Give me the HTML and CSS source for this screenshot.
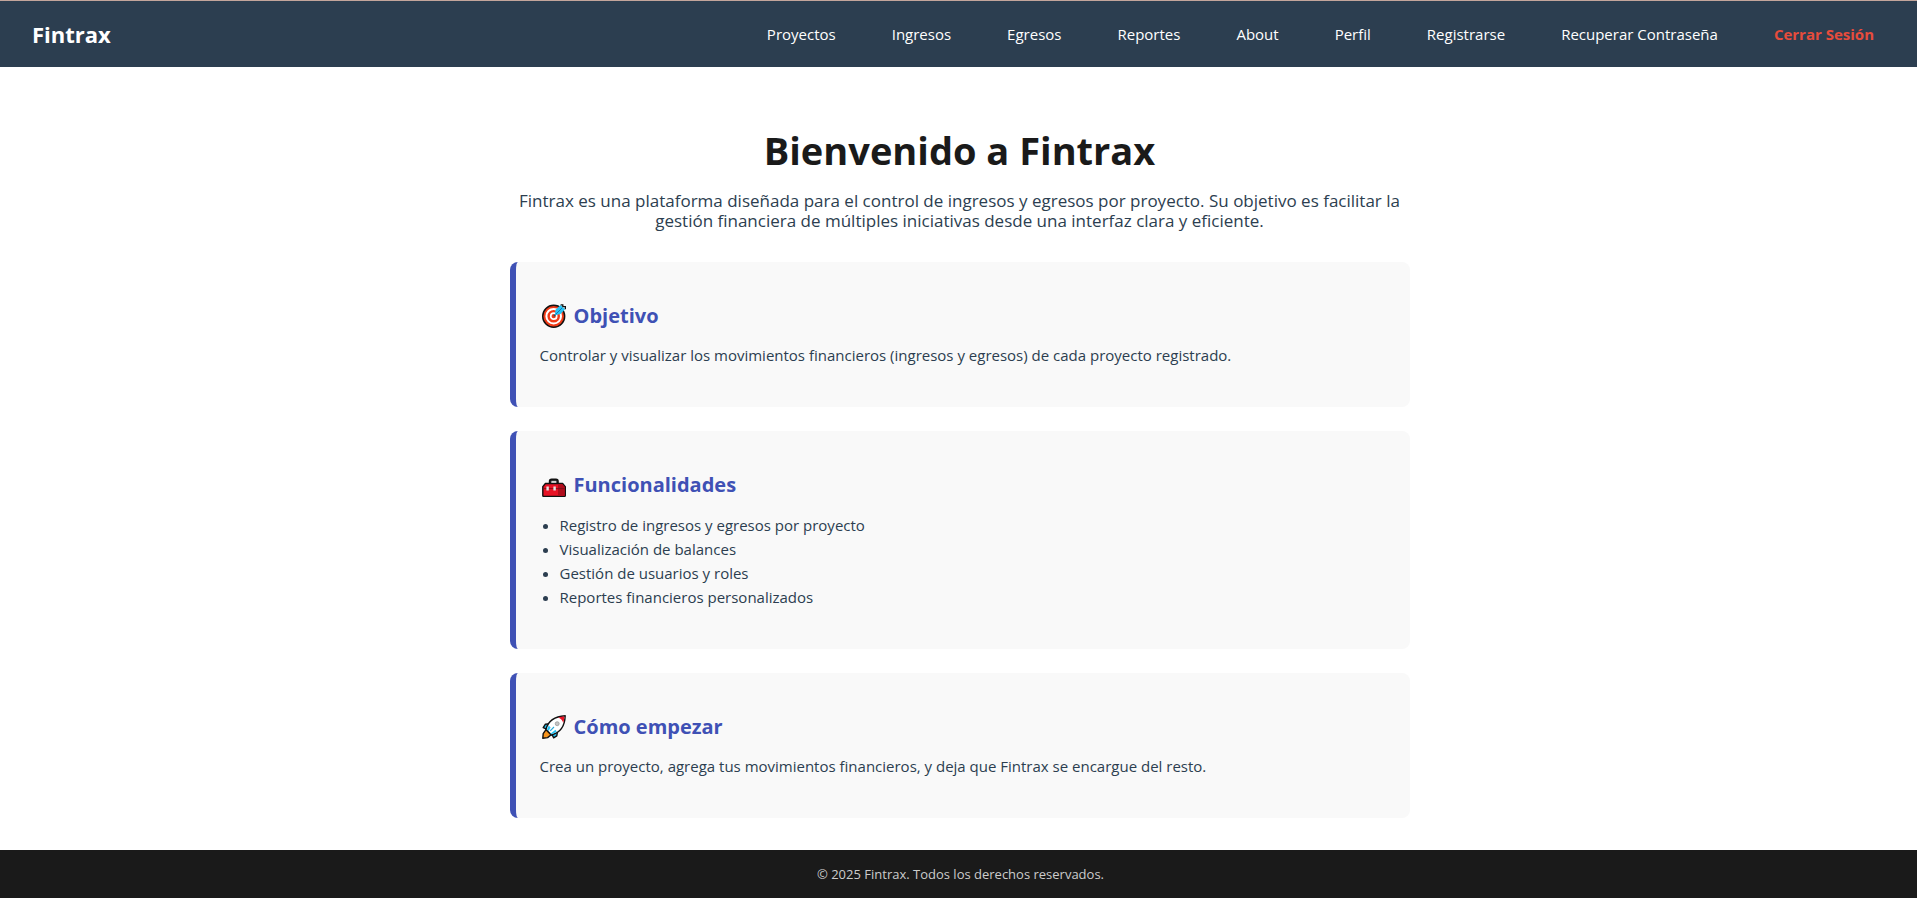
FILE: index.html
```html
<!DOCTYPE html>
<html lang="es">
<head>
<meta charset="utf-8">
<meta name="viewport" content="width=device-width, initial-scale=1">
<title>Fintrax</title>
<link rel="stylesheet" href="styles.css">
</head>
<body class="page">
<header class="topbar">
  <a class="brand" href="#">Fintrax</a>
  <nav class="menu" aria-label="Principal">
    <a class="menu-link" href="#">Proyectos</a>
    <a class="menu-link" href="#">Ingresos</a>
    <a class="menu-link" href="#">Egresos</a>
    <a class="menu-link" href="#">Reportes</a>
    <a class="menu-link" href="#">About</a>
    <a class="menu-link" href="#">Perfil</a>
    <a class="menu-link" href="#">Registrarse</a>
    <a class="menu-link" href="#">Recuperar Contraseña</a>
    <a class="menu-link menu-link-exit" href="#">Cerrar Sesión</a>
  </nav>
</header>
<main class="content">
  <h1 class="title">Bienvenido a Fintrax</h1>
  <p class="lead">Fintrax es una plataforma diseñada para el control de ingresos y egresos por proyecto. Su objetivo es facilitar la gestión financiera de múltiples iniciativas desde una interfaz clara y eficiente.</p>
  <div class="cards">
    <section class="card">
      <h2 class="card-title">
        <svg class="icon" viewBox="0 0 24 24" aria-hidden="true">
          <circle cx="11.7" cy="12.2" r="11" fill="#f03a17" stroke="#111" stroke-width="1.4"/>
          <circle cx="11.7" cy="12.2" r="7.3" fill="none" stroke="#fff" stroke-width="2"/>
          <circle cx="11.7" cy="12.2" r="3" fill="none" stroke="#fff" stroke-width="1.7"/>
          <path d="M11.8 12.2 15.5 8.4" stroke="#16566f" stroke-width="1.4"/>
          <path d="M12.9 10.4 13.6 5.6 18.8.9 20.6 3.2 23.2 4.9 18.6 10 14 11Z" fill="#27c4f5"/>
          <path d="M18.6.8h2.2v1.8h2.6v2.6" fill="none" stroke="#111" stroke-width="1.3"/>
          <path d="M14 10 20 4" stroke="#1277b5" stroke-width="1"/>
        </svg>
        Objetivo
      </h2>
      <p class="card-text">Controlar y visualizar los movimientos financieros (ingresos y egresos) de cada proyecto registrado.</p>
    </section>
    <section class="card">
      <h2 class="card-title">
        <svg class="icon" viewBox="0 0 24 24" aria-hidden="true">
          <path d="M8 10V8.4Q8 6.8 9.6 6.8H14Q15.6 6.8 15.6 8.4V10" fill="none" stroke="#111" stroke-width="2.4"/>
          <path d="M9 9.4V8.6Q9 7.9 9.7 7.9H14Q14.7 7.9 14.7 8.6V9.4" fill="none" stroke="#666" stroke-width=".7"/>
          <path d="M3.4 10.5H20.6L23.3 13.6V22.4Q23.3 23.4 22.3 23.4H1.8Q.8 23.4.8 22.4V13.6Z" fill="#e81224" stroke="#111" stroke-width="1.4" stroke-linejoin="round"/>
          <path d="M16 11.2H20.4L22.6 13.9V22.7H16Z" fill="#b00d1c"/>
          <path d="M1.5 15.6H22.6" stroke="#7d1018" stroke-width=".9"/>
          <path d="M4.4 13.4h2.4v4.2H4.4zM11.4 13.4h2.4v4.2h-2.4z" fill="#e3e3e3"/>
        </svg>
        Funcionalidades
      </h2>
      <ul class="card-list">
        <li>Registro de ingresos y egresos por proyecto</li>
        <li>Visualización de balances</li>
        <li>Gestión de usuarios y roles</li>
        <li>Reportes financieros personalizados</li>
      </ul>
    </section>
    <section class="card">
      <h2 class="card-title">
        <svg class="icon" viewBox="0 0 24 24" aria-hidden="true">
          <path d="M8 8.6 3.4 9.2 1.2 12.6 5.4 14.4" fill="#27c4f5" stroke="#111" stroke-width="1.4" stroke-linejoin="round"/>
          <path d="M15.6 16 14.8 20.8 11.6 22.8 9.6 18.6" fill="#27c4f5" stroke="#111" stroke-width="1.4" stroke-linejoin="round"/>
          <path d="M4 14.6 1.2 18.6.8 23.2 5.6 22.6 9.2 19.8Z" fill="#f7941d" stroke="#111" stroke-width="1.4" stroke-linejoin="round"/>
          <path d="M4 14.4C6 6.4 12 1.4 23.2.8 22.8 11.6 17.6 18 9.4 20Z" fill="#fff" stroke="#111" stroke-width="1.4" stroke-linejoin="round"/>
          <path d="M16.2 2.4Q19.4 1.7 22.4 1.5 22.2 4.8 21.2 8 20.4 4.2 16.2 2.4Z" fill="#e81224"/>
          <path d="M5 14.3 6.8 10.6 8.6 12.4 6.6 15.9ZM8.4 18.8 13.4 14.8 14.8 16.8 9.6 19.3Z" fill="#27c4f5"/>
          <path d="M8.2 15.9 12 12" stroke="#27a9d8" stroke-width="1.1"/>
          <circle cx="15.2" cy="8.7" r="2" fill="#c4c4c4" stroke="#929292" stroke-width=".7"/>
        </svg>
        Cómo empezar
      </h2>
      <p class="card-text">Crea un proyecto, agrega tus movimientos financieros, y deja que Fintrax se encargue del resto.</p>
    </section>
  </div>
</main>
<footer class="footer">© 2025 Fintrax. Todos los derechos reservados.</footer>
</body>
</html>
```
FILE: styles.css
```css
* {
  box-sizing: border-box;
}

.page {
  margin: 0;
  min-height: 100vh;
  display: flex;
  flex-direction: column;
  background: #fff;
  color: #2c3e50;
  font-family: "Segoe UI", "Open Sans", "Noto Sans", sans-serif;
  font-size: 15px;
  line-height: 24px;
}

.topbar {
  display: flex;
  align-items: center;
  justify-content: space-between;
  flex-wrap: wrap;
  min-height: 67px;
  padding: 0 43px 0 32px;
  border-top: 1px solid #c3a59b;
  background: #2c3e50;
}

.brand {
  color: #fff;
  font-size: 22px;
  font-weight: 700;
  text-decoration: none;
}

.menu {
  display: flex;
  flex-wrap: wrap;
  gap: 8px 56px;
}

.menu-link {
  color: #fff;
  text-decoration: none;
}

.menu-link-exit {
  color: #e74c3c;
  font-weight: 700;
}

.content {
  flex: 1;
  width: 100%;
  max-width: 902px;
  margin: 0 auto;
  padding: 59px 0 32px 2px;
}

.title {
  margin: 0 0 17px;
  color: #1a1a1a;
  font-size: 38px;
  line-height: 48px;
  text-align: center;
}

.lead {
  margin: 0 0 31px;
  font-size: 17px;
  line-height: 20px;
  text-align: center;
}

.cards {
  display: flex;
  flex-direction: column;
  gap: 24px;
}

.card {
  padding: 38px 24px 40px;
  border-left: 6px solid #3f51b5;
  border-radius: 8px;
  background: #f9f9f9;
}

.card-title {
  display: flex;
  align-items: center;
  gap: 8px;
  margin: 0 0 11px;
  padding-left: 2px;
  color: #3f51b5;
  font-size: 20px;
  line-height: 32px;
}

.icon {
  width: 24px;
  height: 24px;
}

.card-text {
  margin: 0;
}

.card-list {
  margin: 0;
  padding: 1px 0 0 20px;
}

.footer {
  padding: 12px 12px 12px 16px;
  background: #1a1a1a;
  color: #ccc;
  font-size: 13px;
  text-align: center;
}
```
